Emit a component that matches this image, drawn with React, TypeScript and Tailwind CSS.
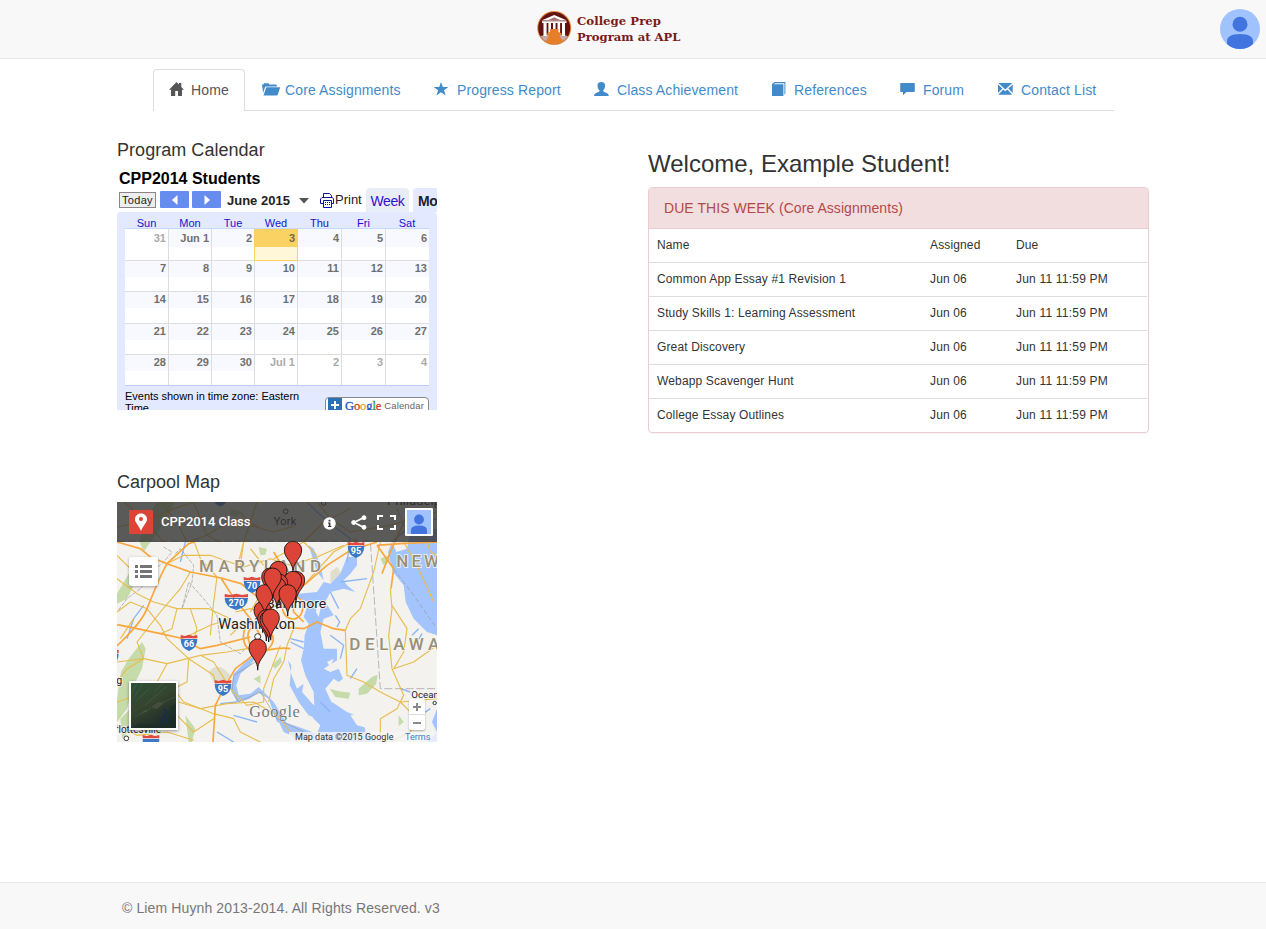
import React from "react";

const HomeIcon = () => (
  <svg width="16" height="15" viewBox="0 0 16 15" fill="currentColor">
    <path d="M7.5 0 L10 2.6 V1 H12.3 V5 L15 7.7 H13 V14 H9 V9 H6.2 V14 H2 V7.7 H0 Z" />
  </svg>
);
const FolderIcon = () => (
  <svg width="19" height="15" viewBox="0 0 19 15" fill="currentColor">
    <path d="M0 2.5 H1.5 L2 1.3 H6.5 L7.3 2.5 H13.5 Q15 2.5 15 4 V4.6 H4.2 Q3.2 4.6 2.9 5.5 L1.1 11 Z" />
    <path d="M4.6 5.3 H18.2 L15.7 12.8 Q15.4 13.6 14.6 13.6 H1.5 L4 5.9 Q4.2 5.3 4.6 5.3 Z" />
  </svg>
);
const StarIcon = () => (
  <svg width="15" height="15" viewBox="0 0 15 15" fill="currentColor">
    <path d="M7 0 L8.9 5 H14.4 L10 8.3 L11.7 13.4 L7 10.2 L2.4 13.4 L4.1 8.3 L-0.4 5 H5.2 Z" />
  </svg>
);
const UserIcon = () => (
  <svg width="15" height="15" viewBox="0 0 15 15" fill="currentColor">
    <path d="M7.3 0 C9.9 0 11.2 1.5 11.1 3.8 C11 5.8 10.2 7.4 9.3 8.3 C9 9.3 9.4 9.6 10.4 10 C13 11 14.7 11.6 14.8 14 H0 C0.1 11.6 1.8 11 4.3 10 C5.3 9.6 5.7 9.3 5.4 8.3 C4.4 7.4 3.6 5.8 3.5 3.8 C3.4 1.5 4.7 0 7.3 0 Z" />
  </svg>
);
const BookIcon = () => (
  <svg width="15" height="15" viewBox="-1 0 15 15" fill="currentColor">
    <path d="M0 2.2 L2.4 0 H13.4 V11.5 L12.4 12.8 V1.2 H3 L1.8 2.2 H11.4 V14 H0 Z" />
  </svg>
);
const CommentIcon = () => (
  <svg width="15" height="15" viewBox="0 0 15 15" fill="currentColor">
    <path d="M1 1 H14 Q14.8 1 14.8 1.8 V9.2 Q14.8 10 14 10 H6.4 L3 13.3 V10 H1 Q0.2 10 0.2 9.2 V1.8 Q0.2 1 1 1 Z" />
  </svg>
);
const MailIcon = () => (
  <svg width="15" height="15" viewBox="0 0 15 15" fill="currentColor">
    <path d="M0.3 1 H14.3 L7.3 7.6 Z M0 2.5 L4.4 6.6 L0 11 Z M14.7 2.5 V11 L10.3 6.6 Z M5.2 7.4 L7.3 9.3 L9.4 7.4 L14.3 12.8 H0.3 Z" />
  </svg>
);

const tabs = [
  { label: "Core Assignments", Icon: FolderIcon, width: "w-[172px]" },
  { label: "Progress Report", Icon: StarIcon, width: "w-[160px]" },
  { label: "Class Achievement", Icon: UserIcon, width: "w-[177px]" },
  { label: "References", Icon: BookIcon, width: "w-[129px]" },
  { label: "Forum", Icon: CommentIcon, width: "w-[98px]" },
  { label: "Contact List", Icon: MailIcon, width: "w-[131px]" },
];

const Logo = () => (
  <svg width="148" height="38" viewBox="535 9 148 38">
    <defs>
      <clipPath id="disc"><circle cx="554.2" cy="28" r="16" /></clipPath>
    </defs>
    <circle cx="554.2" cy="28" r="17" fill="#e08a3c" />
    <circle cx="554.2" cy="28" r="16" fill="#641410" />
    <g clipPath="url(#disc)">
      <path d="M538 37 L546 34.5 H562 L571 37 V46 H538 Z" fill="#c9a9a5" />
      <path d="M554.2 15 L567 20.6 H541.5 Z" fill="#fff" />
      <path d="M554.2 17.2 L560 20 H548.4 Z" fill="#a8746f" />
      <path d="M542 21.2 H566.5 V23 H542 Z M543.5 23 H546.6 V36 H543.5 Z M548.4 23 H551 V34 H548.4 Z M553 23 H555.6 V32 H553 Z M557.5 23 H560.1 V34 H557.5 Z M562 23 H565 V36 H562 Z" fill="#fff" />
      <path d="M550 29 H558.5 V32 L562 33.5 L559.5 35.5 Q562 41 567 46 H541 Q547 41 549 35.5 L546.5 33.5 L550 32 Z" fill="#e57f28" />
    </g>
    <g fill="#7b1a1a" fontFamily="DejaVu Serif, serif" fontWeight="700" fontSize="11.8">
      <text x="577" y="25" textLength="84" lengthAdjust="spacingAndGlyphs">College Prep</text>
      <text x="577" y="40.5" textLength="103.5" lengthAdjust="spacingAndGlyphs">Program at APL</text>
    </g>
  </svg>
);

const Avatar = () => (
  <svg width="40" height="40" viewBox="0 0 40 40">
    <circle cx="20" cy="20" r="20" fill="#a0c3ff" />
    <circle cx="20" cy="15.3" r="7.5" fill="#4274df" />
    <path d="M7 35 V32.5 Q7 25 20 25 Q33 25 33 32.5 V35 Q28 40 20 40 Q12 40 7 35 Z" fill="#4274df" />
  </svg>
);

const weeks = [
  ["31", "Jun 1", "2", "3", "4", "5", "6"],
  ["7", "8", "9", "10", "11", "12", "13"],
  ["14", "15", "16", "17", "18", "19", "20"],
  ["21", "22", "23", "24", "25", "26", "27"],
  ["28", "29", "30", "Jul 1", "2", "3", "4"],
];
const rowHeights = ["h-8", "h-[31px]", "h-8", "h-[31px]", "h-[31px]"];
const cols = "grid grid-cols-[44px_43px_43px_43px_44px_44px_43px]";

const Calendar = () => (
  <div className="h-[242px] w-[320px] overflow-hidden text-black">
    <div className="h-5 pt-px pl-[2px] text-[16px] leading-5 font-bold whitespace-nowrap">CPP2014 Students</div>
    <div className="flex h-6 w-[320px] items-start overflow-hidden whitespace-nowrap">
      <div className="mt-1 ml-[2px] flex h-4 w-[37px] shrink-0 items-center justify-center border border-[#888] bg-[#eee] text-[11px] tracking-[0.3px] text-[#222]">Today</div>
      <div className="mt-[3px] ml-1 flex h-[17px] w-[29px] shrink-0 items-center justify-center rounded-[1px] bg-[#668cf0]">
        <svg width="6" height="10" viewBox="0 0 6 10"><path d="M5.5 0 V10 L0 5 Z" fill="#fff" /></svg>
      </div>
      <div className="mt-[3px] ml-[3px] flex h-[17px] w-[29px] shrink-0 items-center justify-center rounded-[1px] bg-[#668cf0]">
        <svg width="6" height="10" viewBox="0 0 6 10"><path d="M0.5 0 V10 L6 5 Z" fill="#fff" /></svg>
      </div>
      <div className="mt-[5px] ml-[6px] w-[73px] shrink-0 text-[13px] leading-4 font-bold text-[#222]">June 2015</div>
      <svg className="mt-[10px] -ml-px shrink-0" width="10" height="6" viewBox="0 0 10 6"><path d="M0 0 H10 L5 5.5 Z" fill="#555" /></svg>
      <svg className="mt-[5px] ml-[11px] shrink-0" width="15" height="15" viewBox="0 0 15 15" fill="#fff" stroke="#1111aa">
        <path d="M3.5 4 V0.5 H9.5 L11.5 2.5 V4" />
        <path d="M2 4.5 H12.5 L13.5 6 V10.5 H0.5 V6 Z" />
        <path d="M3.5 7.5 H11.5 V14.5 H3.5 Z" />
        <path d="M5 9.5 H10 M5 11.5 H10" strokeDasharray="1 1" />
      </svg>
      <div className="mt-1 w-[31px] shrink-0 text-[13px] leading-4 text-[#222]">Print</div>
      <div className="flex h-6 w-[43px] shrink-0 justify-center rounded-t bg-[#e8eef7] pt-[5px] text-[14px] leading-4 tracking-[-0.4px] text-[#3311cc]">Week</div>
      <div className="ml-1 h-6 w-[24px] shrink-0 rounded-tl bg-[#e3e9ff] pt-[5px] pl-[5px] text-[14px] leading-4 font-bold tracking-[-0.5px] text-[#222]">Mo</div>
    </div>
    <div className="h-[198px] rounded-tl-[4px] rounded-tr-[4px] bg-[#e3e9ff] px-2">
      <div className={`${cols} h-[17px] w-[304px] border-b border-[#c3d9ff] pt-[3px] pr-px text-center text-[11px] leading-4 text-[#2211cc]`}>
        {["Sun", "Mon", "Tue", "Wed", "Thu", "Fri", "Sat"].map((d) => <div key={d} className="-ml-px leading-4">{d}</div>)}
      </div>
      {weeks.map((week, w) => (
        <div key={w} className={`${cols} ${rowHeights[w]} w-[304px] border-b bg-white ${w === 4 ? "border-[#b8cdf8]" : "border-[#ddd]"}`}>
          {week.map((day, d) => {
            const today = w === 0 && d === 3;
            const outside = (w === 0 && d === 0) || (w === 4 && d > 2);
            return (
              <div key={d} className={today ? "-mb-px -ml-px border border-[#fad163] bg-[#fff7d7]" : d < 6 ? "border-r border-[#ddd]" : ""}>
                <div
                  className={`text-right text-[11px] font-bold ${w === 0 ? "h-[18px] leading-[18px]" : "h-4 leading-[15px]"} ${
                    today ? "-mt-px bg-[#fad163] pr-[2px] text-[#75684a]" : outside ? "pr-[2px] text-[#aaa]" : "bg-[#f8f9ff] pr-[2px] text-[#6f6f6f]"
                  }`}
                >
                  {day}
                </div>
              </div>
            );
          })}
        </div>
      ))}
      <div className="flex items-start justify-between">
        <div className="w-[185px] pt-1 text-[11px] leading-3 tracking-[-0.02px]">Events shown in time zone: Eastern Time</div>
        <div className="mt-[11px] flex h-[18px] w-[104px] items-center rounded border border-[#888] bg-white whitespace-nowrap">
          <svg className="ml-[2px]" width="14" height="16" viewBox="0 0 14 16">
            <path d="M0 0 H14 V16 H0 Z" fill="#2a72b5" />
            <path d="M3 7 H11 M7 3 V11" stroke="#fff" strokeWidth="2" />
          </svg>
          <span className="ml-[3px] font-['Liberation_Serif',serif] text-[12.5px] tracking-[-0.1px] [-webkit-text-stroke:0.3px]">
            <span className="text-[#2454c8]">G</span><span className="text-[#d23a2f]">o</span><span className="text-[#e5a91c]">o</span><span className="text-[#2454c8]">g</span><span className="text-[#259b40]">l</span><span className="text-[#d23a2f]">e</span>
          </span>
          <span className="ml-[3px] text-[9.5px] tracking-[0.15px] text-[#666]">Calendar</span>
        </div>
      </div>
    </div>
  </div>
);

const majorRoads = [
  "M0 120 L70 140 L100 165 L150 185 L215 125 L232 120",
  "M150 185 C130 220 110 270 90 320 S20 410 0 432",
  "M150 185 L220 210 L312 228 L372 245 L440 300",
  "M312 228 L345 280 L400 350 L430 400",
  "M0 368 L60 380 L130 395 L190 408 L250 440 L300 430 L400 405",
  "M440 430 L395 470 L355 500 L320 560 L295 610 L288 720",
  "M400 350 C370 390 375 430 400 445 S470 430 520 440",
  "M400 380 C450 370 490 400 455 440 S375 410 400 380",
  "M400 370 L450 330 L500 290 L560 250 L630 190 L700 145 L780 120",
  "M470 150 L500 200 L520 260 L530 330 L560 360",
  "M500 290 C530 270 570 290 555 330 S480 350 500 290",
  "M430 370 L560 380 L600 360 L650 380 L685 385",
  "M780 130 L850 125 L960 120",
  "M795 215 L820 150 L870 40 M780 130 L830 200 L822 260",
];
const minorRoads = [
  "M0 230 L60 275 L110 300 L180 320 L275 320 L340 350",
  "M20 0 L80 50 L140 120 M130 0 L180 60 L210 120 L270 100",
  "M150 185 L200 160 L280 160 L380 195 L460 170 L520 190",
  "M232 120 L250 170 L300 225 L290 300 L280 400",
  "M90 320 L130 370 L150 410 L215 470 L210 540 L170 560 L200 600 L290 635",
  "M0 480 L80 470 L150 485 L250 460 L330 450 L390 440",
  "M80 470 L60 420 L130 330 L190 260 L220 210",
  "M250 460 L290 480 L340 560 L390 610 L440 600 L440 560 L490 430",
  "M185 600 L250 620 L330 605 L410 600 L480 640 L520 690 L540 720",
  "M215 470 L290 520 L300 560 M290 635 L350 650 L370 690 L430 720",
  "M170 560 L180 640 L230 690 L290 650",
  "M0 600 L60 580 L100 600 L170 560 M0 670 L60 700 L150 690 L230 715",
  "M370 190 L380 120 L420 0 M470 170 L560 120 L620 60 L700 20",
  "M400 140 L440 190 M380 120 L360 200 M560 120 L600 160 M520 190 L600 165 L680 130",
  "M530 380 L510 430 L500 480 L470 530 L455 600",
  "M560 250 L650 150 L720 110",
  "M685 385 L690 520 L740 540 L790 570 L850 600 L960 590",
  "M685 385 L700 350 L730 320 L770 210 L790 120",
  "M820 260 L825 320 L815 400 L825 500 L860 580 L840 620 L790 650 L790 720",
  "M825 310 L870 380 L860 450 L830 500 L890 480 L960 430",
  "M850 600 L900 650 L880 690 L820 720 M860 120 L900 190 L950 300",
  "M600 0 L640 50 L700 90 L820 70 L960 30",
  "M0 75 L80 60 L170 20 L230 0 M270 100 L350 50 L420 70",
  "M0 330 L40 300 L90 320 M0 160 L70 230 L100 250 M10 410 L50 350",
  "M180 320 L165 380 L130 395 M220 320 L240 380 L225 430 M340 350 L280 370 L200 408",
  "M0 540 L30 500 L80 470 M100 600 L120 540 L150 485",
  "M340 400 L370 370 L430 360 M355 330 L400 320 L470 340 M480 210 L440 260 L400 330",
  "M900 40 L920 90 L940 150 L960 160 M840 20 L860 70 L900 110 L960 90",
  "M370 30 L400 70 L470 90 L540 70 M230 0 L250 50 L270 100 L310 120",
];

const shields = [
  { x: 405, y: 248, n: "70", w: 50 },
  { x: 358, y: 299, n: "270", w: 70 },
  { x: 216, y: 422, n: "66", w: 50 },
  { x: 318, y: 557, n: "95", w: 50 },
  { x: 717, y: 143, n: "95", w: 50 },
];
const clippedShields = [[102, 722], [-20, 466], [310, -12]];

const pins: [number, number][] = [
  [528, 202], [484, 262], [537, 292], [528, 292], [486, 300], [480, 310], [512, 332], [460, 282],
  [437, 382], [443, 332], [467, 282], [448, 407], [455, 410], [461, 405], [422, 495],
];

const Pin = ({ x, y }: { x: number; y: number }) => (
  <g transform={`translate(${x} ${y})`}>
    <path d="M0 0 V10" stroke="#222" strokeWidth="4" />
    <path d="M0 2 C-5 -27 -26 -34 -26 -58 A26 26 0 0 1 26 -58 C26 -34 5 -27 0 2 Z" fill="#db4437" stroke="#111" strokeWidth="2.6" />
  </g>
);

const Shield = ({ x, y, w }: { x: number; y: number; w: number }) => (
  <g transform={`translate(${x} ${y})`}>
    <path d={`M${-w / 2} -11 H${w / 2} Q${w / 2} 16 0 25 Q${-w / 2} 16 ${-w / 2} -11 Z`} fill="#3b78c7" />
    <path d={`M${-w / 2} -13 V-23 L${-w / 4} -20 L0 -24 L${w / 4} -20 L${w / 2} -23 V-13 Z`} fill="#df4b40" />
  </g>
);

const MapTerrain = () => (
  <svg width="320" height="240" viewBox="0 0 960 720" className="block">
    <rect width="960" height="720" fill="#f3f2ee" />
    <g fill="#c5dbaa">
      <path d="M80 60 L120 0 L175 0 L135 70 L100 120 L80 150 L68 120 Z M0 275 L35 215 L60 230 L30 290 L0 305 Z" />
      <path d="M75 420 L86 440 L75 500 L45 560 L30 620 L0 660 L0 590 L12 510 L35 470 Z" />
      <path d="M205 640 L235 680 L225 720 L215 720 Z M10 650 L40 620 L50 670 L15 710 Z" />
      <path d="M425 135 L450 140 L445 158 L430 160 Z M940 125 L960 140 V170 L945 150 Z M950 220 L960 215 V245 Z" />
      <path d="M638 560 L665 568 L700 572 L695 590 L655 585 Z M725 560 L765 525 L782 518 L778 545 L750 575 L725 580 Z" />
      <path d="M465 490 L490 465 L495 480 L475 500 Z M845 640 L860 660 L845 672 Z M410 530 L430 520 L430 545 Z" />
      <path d="M790 170 L815 160 L820 175 L800 190 Z M340 20 L370 30 L360 45 L340 40 Z" />
    </g>
    <path d="M275 510 Q295 485 320 500 L342 520 L325 545 L290 540 Z M640 210 L660 195 L675 215 L660 245 L640 240 Z" fill="#e0dfce" />
    <g fill="#a3c4fc">
      <path d="M960 80 L880 85 L870 140 L838 150 L825 120 L813 150 L828 210 L860 250 L866 300 L890 350 L930 390 L960 400 Z" />
      <path d="M720 165 L690 165 L670 215 L640 245 L620 240 L600 270 L545 275 L535 285 L575 300 L560 345 L575 365 L563 400 L560 440 L552 475 L565 520 L590 570 L592 610 L560 590 L545 560 L540 585 L570 615 L590 650 L610 670 L600 695 L545 675 L500 660 L480 648 L500 690 L540 708 L590 720 L730 720 L735 670 L700 650 L680 625 L650 615 L625 560 L650 530 L665 540 L678 530 L665 500 L640 510 L620 500 L660 475 L660 440 L620 440 L610 390 L620 350 L650 340 L625 300 L640 270 L680 260 L715 270 L690 250 L680 235 L700 215 L720 190 Z" />
      <path d="M645 600 L690 630 L740 650 L745 690 L780 720 L620 720 Z" />
      <path d="M420 460 L390 475 L350 515 L342 560 L360 600 L395 592 L425 572 L455 590 L480 660 L510 665 L470 600 L450 580 L425 555 L400 575 L365 580 L358 550 L370 515 L400 490 Z" />
      <path d="M513 475 L523 490 L518 550 L545 600 L575 640 L600 650 L590 610 L555 570 L560 545 L540 560 L524 520 Z" />
      <path d="M960 690 L940 710 L930 720 H960 Z M960 620 L945 660 L960 690 Z" />
      <path d="M575 130 L600 210 L620 235 L610 190 L590 140 Z" />
    </g>
    <g stroke="#8ab4f8" strokeWidth="4" fill="none" strokeLinejoin="round">
      <path d="M690 180 L700 110 L660 80 L600 30 L570 0 M670 240 L750 230 M640 270 L665 320 M560 440 L520 420 M700 530 L720 500" />
      <path d="M825 120 L870 80 L960 50 M310 605 L360 600 M350 640 L420 660 M300 690 L350 720 M520 410 L560 420" />
      <path d="M205 120 L190 180 M30 410 L50 350 L80 310 M640 400 L680 430 L670 470" />
      <path d="M640 630 L610 600 M655 340 L668 360 L660 375 M905 380 L885 400 M915 395 L900 420 M850 560 L880 570 M910 640 L940 620" />
    </g>
    <g fill="#f3f2ee">
      <path d="M665 600 L690 610 L680 620 Z M700 640 L740 635 L770 665 L760 680 L720 670 Z M600 300 L612 315 L605 345 L597 330 Z M630 480 L650 470 L640 495 Z M590 710 L610 700 L620 715 Z" />
    </g>
    <g stroke="#999" strokeWidth="2" fill="none">
      <path d="M0 117 H760 L790 560 H960" strokeDasharray="24 8" />
      <path d="M830 200 L890 280 L960 380" strokeDasharray="14 8" />
      <path d="M140 135 L165 150 L140 180 L110 205 L70 260 L30 290 L0 330 M175 155 L190 140 L230 190 L225 240 L195 320 L215 240 L260 290 L300 340 L310 420 L370 455 L385 440" strokeDasharray="12 4" />
      <path d="M422 445 L415 480 L350 520 L345 570 L365 600 L430 570 L480 650 L540 680 L600 710" />
    </g>
    <g stroke="#e8bd4e" strokeWidth="3.4" fill="none" strokeLinejoin="round">
      {minorRoads.map((d) => <path key={d} d={d} />)}
    </g>
    <g stroke="#fba63c" strokeWidth="5" fill="none" strokeLinejoin="round">
      {majorRoads.map((d) => <path key={d} d={d} />)}
    </g>
    <g fontFamily="Roboto, sans-serif" stroke="#f6f5f1" strokeWidth="5" paintOrder="stroke">
      <g fill="#998f7a" fontSize="51" fontWeight="500">
        <text x="246" y="211" textLength="366">MARYLAND</text>
        <text x="838" y="194" textLength="128">NEW</text>
        <text x="697" y="444" textLength="270">DELAWA</text>
      </g>
      <g fill="#222">
        <text x="447" y="318" fontSize="40" textLength="181" lengthAdjust="spacingAndGlyphs">Baltimore</text>
        <text x="304" y="381" fontSize="42" textLength="230" lengthAdjust="spacingAndGlyphs">Washington</text>
        <text x="883" y="587" fontSize="29">Ocean</text>
        <text x="-58" y="692" fontSize="31" textLength="190" lengthAdjust="spacingAndGlyphs">Charlottesville</text>
        <text x="-2" y="546" fontSize="32">g</text>
        <text x="470" y="69" fontSize="33" textLength="68">York</text>
        <text x="810" y="10" fontSize="40" textLength="215">Philadelphia</text>
      </g>
    </g>
    <g fill="#fff" stroke="#333" strokeWidth="3">
      <circle cx="422" cy="404" r="9" />
      <circle cx="506" cy="28" r="7" />
      <circle cx="620" cy="3" r="7" />
      <circle cx="28" cy="709" r="7" />
      <circle cx="953" cy="603" r="5" />
    </g>
    {clippedShields.map(([x, y]) => <Shield key={x} x={x} y={y} w={50} />)}
    {shields.map((s) => (
      <g key={`${s.x}-${s.y}`}>
        <Shield x={s.x} y={s.y} w={s.w} />
        <text x={s.x} y={s.y + 12} textAnchor="middle" fontFamily="Roboto, sans-serif" fontSize="27" fontWeight="700" fill="#fff">{s.n}</text>
      </g>
    ))}
    {pins.map(([x, y]) => <Pin key={`${x}-${y}`} x={x} y={y} />)}
    <text x="397" y="644" fontFamily="Liberation Serif, serif" fontSize="49" fill="#777" stroke="#fff" strokeWidth="2" paintOrder="stroke" textLength="151">Google</text>
  </svg>
);

const CarpoolMap = () => (
  <div className="relative h-[240px] w-[320px] overflow-hidden font-['Roboto',sans-serif]">
    <MapTerrain />
    <div className="absolute inset-x-0 top-0 flex h-10 items-start bg-[#333]/80">
      <svg className="mt-2 ml-3" width="24" height="24" viewBox="0 0 24 24">
        <rect width="24" height="24" rx="1" fill="#db4437" />
        <path d="M12 3.5 C15.6 3.5 18 6 18 9 C18 13 14.5 14.5 12 21 C9.5 14.5 6 13 6 9 C6 6 8.4 3.5 12 3.5 Z" fill="#fff" />
        <circle cx="12" cy="9" r="2" fill="#db4437" />
      </svg>
      <div className="mt-3 ml-2 w-[161px] text-[13px] leading-4 font-medium tracking-[-0.05px] text-white">CPP2014 Class</div>
      <svg className="mt-[14.5px] ml-[0.5px]" width="13" height="13" viewBox="0 0 13 13">
        <circle cx="6.5" cy="6.5" r="6.2" fill="#fff" />
        <path d="M5 5.5 H7.4 V9 H8.4 V10 H5 V9 H5.8 V6.5 H5 Z M5.6 2.8 H7.4 V4.4 H5.6 Z" fill="#333" />
      </svg>
      <svg className="mt-[13px] ml-[15px]" width="16" height="15" viewBox="0 0 16 15" fill="#fff" stroke="#fff">
        <path d="M13 2.5 L3 7.5 L13 12.5" fill="none" strokeWidth="1.8" />
        <circle cx="13" cy="2.7" r="2" /><circle cx="2.7" cy="7.5" r="2" /><circle cx="13" cy="12.3" r="2" />
      </svg>
      <svg className="mt-[13px] ml-[10px]" width="19" height="15" viewBox="0 0 19 15" fill="none" stroke="#fff" strokeWidth="2">
        <path d="M1 5 V1 H6 M13 1 H18 V5 M18 10 V14 H13 M6 14 H1 V10" />
      </svg>
      <svg className="mt-[6px] ml-[9px]" width="28" height="28" viewBox="0 0 28 28">
        <rect width="28" height="28" rx="1" fill="#fff" />
        <rect x="2" y="2" width="24" height="24" fill="#a0c3ff" />
        <circle cx="14" cy="11.5" r="4.9" fill="#4274df" />
        <path d="M6 26 V22 Q6 17.5 14 17.5 Q22 17.5 22 22 V26 Z" fill="#4274df" />
      </svg>
    </div>
    <div className="absolute top-[55px] left-3 flex size-[29px] items-center justify-center rounded-[2px] bg-white shadow-[0_1px_3px_rgba(0,0,0,0.35)]">
      <svg width="17" height="13" viewBox="0 0 17 13" fill="#757575">
        <path d="M0 0 H3 V3 H0 Z M5 0 H17 V3 H5 Z M0 5 H3 V8 H0 Z M5 5 H17 V8 H5 Z M0 10 H3 V13 H0 Z M5 10 H17 V13 H5 Z" />
      </svg>
    </div>
    <div className="absolute top-[179px] left-3 size-[49px] border-2 border-white shadow-[0_1px_3px_rgba(0,0,0,0.4)]">
      <svg width="45" height="45" viewBox="0 0 45 45" className="block">
        <defs>
          <linearGradient id="sat" x1="0" y1="0" x2="0.6" y2="1">
            <stop offset="0" stopColor="#2c5137" /><stop offset="0.5" stopColor="#36452f" /><stop offset="1" stopColor="#1d2b29" />
          </linearGradient>
        </defs>
        <rect width="45" height="45" fill="url(#sat)" />
        <g stroke="#466b4b" strokeWidth="1" opacity="0.45" fill="none">
          <path d="M2 16 L12 0 M5 18 L20 4 M14 22 L36 3 M4 34 L20 25 M30 20 L44 14 M1 10 L6 0 M24 8 L32 0" />
        </g>
        <path d="M20 24 L27 19 L33 20 L26 26 Z M9 30 L15 27 L17 29 Z" fill="#646650" opacity="0.4" />
        <path d="M32 26 L37 29 L33 32 L36 38 L33 41 M31 34 L31 40" stroke="#172d55" strokeWidth="1.4" fill="none" />
        <path d="M0 45 L8 40 L22 42 L28 45 Z M39 24 L45 20 V45 H39 Z" fill="#182c25" opacity="0.5" />
      </svg>
    </div>
    <div className="absolute top-[197px] left-[292px] flex h-[31px] w-4 flex-col items-center rounded-[2px] bg-white shadow-[0_1px_2px_rgba(0,0,0,0.3)]">
      <svg width="16" height="31" viewBox="0 0 16 31">
        <path d="M4 8 H12 M8 4 V12 M4 24 H12" stroke="#8a8a8a" strokeWidth="2" />
        <path d="M0 15.5 H16" stroke="#ddd" />
      </svg>
    </div>
    <div className="absolute right-0 bottom-0 flex h-[10px] w-[148px] items-center bg-[#f5f5f5]/80 pl-[6px] text-[9px] leading-[10px] whitespace-nowrap text-[#333]">
      <span className="w-[110px] tracking-[0.02px]">Map data ©2015 Google</span>
      <span className="text-[#3a7ec0]">Terms</span>
    </div>
  </div>
);

const assignments = [
  "Common App Essay #1 Revision 1",
  "Study Skills 1: Learning Assessment",
  "Great Discovery",
  "Webapp Scavenger Hunt",
  "College Essay Outlines",
];

const DuePanel = () => (
  <section className="h-[246px] w-[501px] rounded border border-[#ebccd1] shadow-[0_1px_1px_rgba(0,0,0,0.05)]">
    <h3 className="h-[41px] rounded-t-[3px] border-b border-[#ebccd1] bg-[#f2dede] pt-[10px] pl-[15px] text-[14px] leading-5 tracking-[0.06px] text-[#b04a48]">DUE THIS WEEK (Core Assignments)</h3>
    <div className="mr-px text-[12px] leading-[17px] tracking-[0.14px] text-[#333]">
      <div className="grid h-[33px] grid-cols-[273px_86px_1fr] pt-2 pl-2">
        <span>Name</span><span>Assigned</span><span>Due</span>
      </div>
      {assignments.map((name) => (
        <div key={name} className="grid h-[34px] grid-cols-[273px_86px_1fr] border-t border-[#ddd] pt-2 pl-2">
          <span>{name}</span><span>Jun 06</span><span className="tracking-[0.2px]">Jun 11 11:59 PM</span>
        </div>
      ))}
    </div>
  </section>
);

export default function App() {
  return (
    <div className="flex h-[929px] w-[1266px] flex-col overflow-hidden bg-white font-['Liberation_Sans',Arial,sans-serif] text-[#333]">
      <header className="flex h-[59px] shrink-0 justify-between border-b border-[#e7e7e7] bg-[#f8f8f8] pt-[9px] pr-[6px] pl-[535px]">
        <Logo />
        <Avatar />
      </header>
      <nav className="mt-[10px] ml-[153px] flex h-[42px] w-[961px] shrink-0 text-[14px] leading-5 tracking-[0.12px] whitespace-nowrap">
        <a className="flex w-[92px] items-start rounded-t border border-b-0 border-[#ddd] pt-[10px] pl-[15px] text-[#555]">
          <span className="mt-[2px] w-[22px]"><HomeIcon /></span>
          <span>Home</span>
        </a>
        <div className="flex grow border-b border-[#ddd] pl-[2px]">
          {tabs.map(({ label, Icon, width }) => (
            <a key={label} className={`flex ${width} items-start pt-[11px] pl-[15px] text-[#428bca]`}>
              <span className="mt-[2px] w-[23px] shrink-0"><Icon /></span>
              <span>{label}</span>
            </a>
          ))}
        </div>
      </nav>
      <main className="flex grow pl-[117px]">
        <div className="w-[531px] pt-[29px]">
          <h2 className="h-[28px] text-[18px] leading-5 tracking-[0.04px]">Program Calendar</h2>
          <Calendar />
          <h2 className="mt-[62px] h-[30px] text-[18px] leading-5">Carpool Map</h2>
          <CarpoolMap />
        </div>
        <div className="pt-[40px]">
          <h1 className="h-[36px] text-[24px] leading-[26px]">Welcome, Example Student!</h1>
          <DuePanel />
        </div>
      </main>
      <footer className="h-[47px] shrink-0 border-t border-[#e7e7e7] bg-[#f8f8f8] pt-[15px] pl-[122px] text-[14px] leading-5 tracking-[0.12px] text-[#777]">
        © Liem Huynh 2013-2014. All Rights Reserved. v3
      </footer>
    </div>
  );
}
